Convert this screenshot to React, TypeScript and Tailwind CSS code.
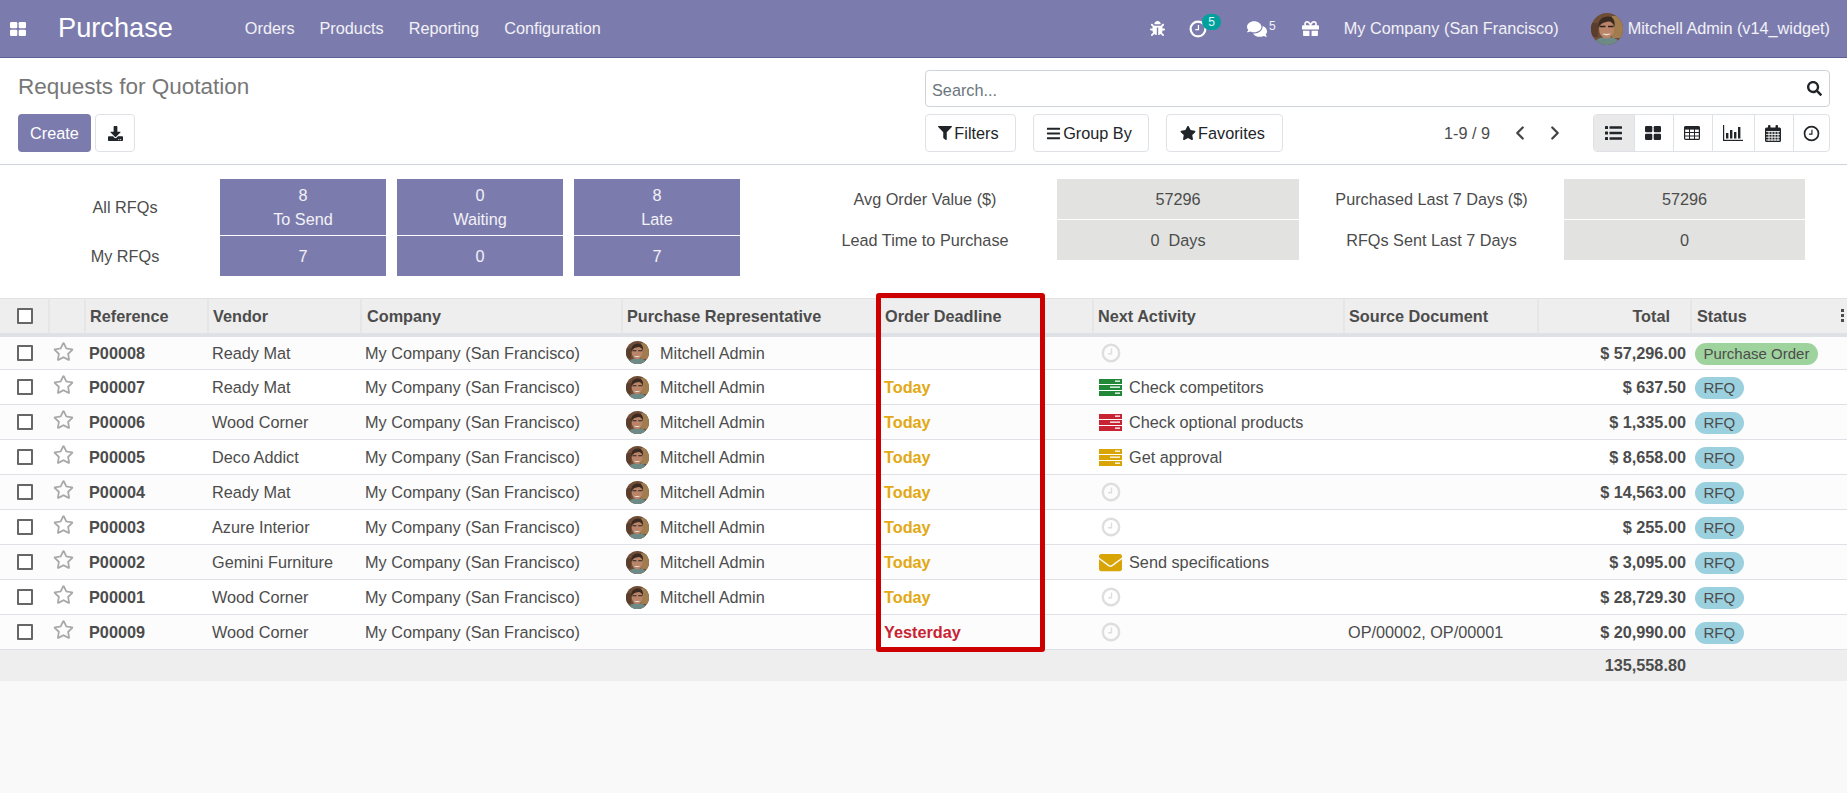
import { FaBars, FaBug, FaComments, FaDownload, FaEnvelope, FaFilter, FaGift, FaRegStar, FaSearch, FaStar } from "react-icons/fa";
import { LuChevronLeft, LuChevronRight } from "react-icons/lu";

const rows = [
  { ref: "P00008", vendor: "Ready Mat", deadline: "", activity: "", kind: "none", total: "$ 57,296.00", status: "Purchase Order" },
  { ref: "P00007", vendor: "Ready Mat", deadline: "Today", activity: "Check competitors", kind: "green", total: "$ 637.50", status: "RFQ" },
  { ref: "P00006", vendor: "Wood Corner", deadline: "Today", activity: "Check optional products", kind: "red", total: "$ 1,335.00", status: "RFQ" },
  { ref: "P00005", vendor: "Deco Addict", deadline: "Today", activity: "Get approval", kind: "yellow", total: "$ 8,658.00", status: "RFQ" },
  { ref: "P00004", vendor: "Ready Mat", deadline: "Today", activity: "", kind: "none", total: "$ 14,563.00", status: "RFQ" },
  { ref: "P00003", vendor: "Azure Interior", deadline: "Today", activity: "", kind: "none", total: "$ 255.00", status: "RFQ" },
  { ref: "P00002", vendor: "Gemini Furniture", deadline: "Today", activity: "Send specifications", kind: "mail", total: "$ 3,095.00", status: "RFQ" },
  { ref: "P00001", vendor: "Wood Corner", deadline: "Today", activity: "", kind: "none", total: "$ 28,729.30", status: "RFQ" },
  { ref: "P00009", vendor: "Wood Corner", deadline: "Yesterday", activity: "", kind: "none", total: "$ 20,990.00", status: "RFQ", source: "OP/00002, OP/00001", noRep: true },
];

function Avatar({ size }: { size: number }) {
  return (
    <svg width={size} height={size} viewBox="0 0 32 32" className="shrink-0 rounded-full">
      <rect width="32" height="32" fill="#6e4c36" />
      <rect x="21" y="3" width="11" height="22" fill="#a07c4e" />
      <rect x="0" y="10" width="7" height="14" fill="#5a3d2b" />
      <path d="M3 32c1-6 6-8 13-8s12 2 13 8z" fill="#6d8a86" />
      <ellipse cx="15.500" cy="16" rx="7.500" ry="9.500" fill="#b98468" />
      <path d="M7.500 15c-1-8 4-11.500 9.500-11.500 5 0 7.500 4 6.500 10.500-1-3.500-3-5.500-6-5.500-4 1-7.500 1-10 6.500z" fill="#3a2a22" />
      <path d="M9 13.500h5.500M17 13.500h5.500" stroke="#2b2220" strokeWidth="1.400" />
      <path d="M11 20.500c2 2.400 7 2.400 9 0-2 .5-7 .5-9 0z" fill="#eadfd4" />
    </svg>
  );
}

function ThLarge({ className }: { className: string }) {
  return (
    <svg viewBox="0 0 16 14" className={className} fill="currentColor">
      <rect x="0" y="0" width="7.300" height="6.300" rx="1.200" />
      <rect x="8.700" y="0" width="7.300" height="6.300" rx="1.200" />
      <rect x="0" y="7.700" width="7.300" height="6.300" rx="1.200" />
      <rect x="8.700" y="7.700" width="7.300" height="6.300" rx="1.200" />
    </svg>
  );
}

function ClockIcon({ className, thick = 2.400 }: { className: string; thick?: number }) {
  return (
    <svg viewBox="0 0 20 20" className={className} fill="none" stroke="currentColor">
      <circle cx="10" cy="10" r="8.200" strokeWidth={thick} />
      <path d="M10.500 5.500v5.300H7" strokeWidth="1.400" />
    </svg>
  );
}

function ListIcon() {
  return (
    <svg viewBox="0 0 17 14" className="h-[14px] w-[17px]" fill="#212529">
      {[0, 5.500, 11].map((y) => (
        <g key={y}>
          <rect x="0" y={y} width="3" height="3" rx=".6" />
          <rect x="4.500" y={y + 0.300} width="12.500" height="2.400" rx=".5" />
        </g>
      ))}
    </svg>
  );
}

function TableIcon() {
  return (
    <svg viewBox="0 0 16 14" className="h-[14px] w-[16px]">
      <rect x=".6" y=".6" width="14.800" height="12.800" rx="1" fill="none" stroke="#212529" strokeWidth="1.200" />
      <rect x=".6" y=".6" width="14.800" height="3" fill="#212529" />
      <path d="M.6 6.500h14.800M.6 10h14.800M5.500 3v10.500M10.500 3v10.500" stroke="#212529" strokeWidth="1" fill="none" />
    </svg>
  );
}

function BarChart() {
  return (
    <svg viewBox="0 0 20 16" className="h-[16px] w-[20px]" fill="#212529">
      <rect x="0" y="0" width="1.200" height="16" />
      <rect x="0" y="14.800" width="20" height="1.200" />
      <rect x="3" y="8" width="2.400" height="5.500" />
      <rect x="7" y="5" width="2.400" height="8.500" />
      <rect x="11" y="7" width="2.400" height="6.500" />
      <rect x="15" y="2" width="2.400" height="11.500" />
    </svg>
  );
}

function CalendarIcon() {
  return (
    <svg viewBox="0 0 16 17" className="h-[17px] w-[16px]" fill="#212529">
      <path d="M1.500 2.500h13A1.500 1.500 0 0 1 16 4v11.500a1.500 1.500 0 0 1-1.500 1.500h-13A1.500 1.500 0 0 1 0 15.500V4a1.500 1.500 0 0 1 1.500-1.500z" />
      <rect x="3" y="0" width="2.500" height="4.500" rx="1" />
      <rect x="10.500" y="0" width="2.500" height="4.500" rx="1" />
      <path d="M1.200 6.600h13.600M1.200 9.400h13.600M1.200 12.200h13.600M1.200 15h13.600M4 6v10M7 6v10M10 6v10M13 6v10" stroke="#fff" strokeWidth=".9" />
    </svg>
  );
}

function TasksIcon({ color }: { color: string }) {
  return (
    <svg viewBox="0 0 23 17" className="h-[17px] w-[23px] shrink-0">
      {[0, 6, 12].map((y, i) => (
        <g key={y}>
          <rect x="0" y={y} width="23" height="5" fill={color} />
          <rect x={i === 1 ? 11 : 16} y={y + 1.500} width={i === 1 ? 10 : 5} height="1.300" fill="#fff" />
        </g>
      ))}
    </svg>
  );
}

function ActivityIcon({ kind }: { kind: string }) {
  if (kind === "green") return <TasksIcon color="#218838" />;
  if (kind === "red") return <TasksIcon color="#c82333" />;
  if (kind === "yellow") return <TasksIcon color="#d9a406" />;
  if (kind === "mail") return <FaEnvelope className="h-[23px] w-[23px] shrink-0 text-[#d9a406]" />;
  return <ClockIcon className="ml-[2px] h-[20px] w-[20px] text-[#dedede]" />;
}

function Checkbox() {
  return <span className="block h-[16px] w-[16px] rounded-[1px] border-2 border-[#666] bg-white" />;
}

function ToolButton({ children, className }: { children: React.ReactNode; className: string }) {
  return (
    <button className={`flex h-[38px] items-center justify-center rounded-[4px] border border-[#dee2e6] bg-white text-[16.25px] text-[#212529] ${className}`}>
      {children}
    </button>
  );
}

export default function App() {
  const headCell = "border-r-2 border-[#e6e6e6] px-[4px] text-left font-bold";

  return (
    <div className="flex min-h-[793px] flex-col bg-[#f9f9f9] font-['Liberation_Sans',sans-serif] text-[16.25px] text-[#4c4c4c]">
      {/* Top bar */}
      <header className="flex h-[58px] items-center border-b border-[#5f5e97] bg-[#7c7bad] text-white/90">
        <ThLarge className="ml-[10px] h-[14px] w-[16px] text-white" />
        <span className="ml-[32px] text-[27.2px] text-white">Purchase</span>
        <nav className="ml-[72px] flex gap-[25px]">
          <span>Orders</span>
          <span>Products</span>
          <span>Reporting</span>
          <span>Configuration</span>
        </nav>
        <div className="ml-auto flex items-center pr-[17px]">
          <FaBug className="h-[15px] w-[15px] text-white" />
          <span className="relative ml-[24px]">
            <ClockIcon className="h-[18px] w-[18px] text-white" />
            <span className="absolute left-[13px] top-[-6px] flex h-[16px] w-[19px] items-center justify-center rounded-full bg-[#00a09d] text-[12px]">5</span>
          </span>
          <FaComments className="ml-[40px] h-[18px] w-[20px] text-white" />
          <span className="mb-[6px] ml-[2px] text-[12px]">5</span>
          <FaGift className="ml-[26px] h-[17px] w-[17px] text-white" />
          <span className="ml-[25px]">My Company (San Francisco)</span>
          <span className="ml-[32px]"><Avatar size={32} /></span>
          <span className="ml-[5px]">Mitchell Admin (v14_widget)</span>
        </div>
      </header>

      {/* Control panel */}
      <section className="flex h-[107px] border-b border-[#ced4da] bg-white pt-[12px]">
        <div className="w-[925px] pl-[18px]">
          <h1 className="h-[33px] text-[22.5px] font-normal leading-[33px] text-[#777]">Requests for Quotation</h1>
          <div className="mt-[11px] flex gap-[4px]">
            <button className="h-[38px] w-[73px] rounded-[4px] bg-[#7c7bad] text-white">Create</button>
            <ToolButton className="w-[40px]"><FaDownload className="h-[15px] w-[15px]" /></ToolButton>
          </div>
        </div>
        <div className="w-[905px]">
          <div className="flex h-[37px] items-center justify-between rounded-[4px] border border-[#ced4da] pl-[6px] pr-[7px] text-[#6c757d]">
            <span className="pt-[3px]">Search...</span>
            <FaSearch className="h-[15px] w-[15px] text-[#212529]" />
          </div>
          <div className="mt-[7px] flex items-center">
            <ToolButton className="w-[91px] gap-[2px] pr-[4px]"><FaFilter className="h-[14px] w-[14px]" />Filters</ToolButton>
            <ToolButton className="ml-[17px] w-[116px] gap-[2px] pr-[4px]"><FaBars className="h-[15px] w-[15px]" />Group By</ToolButton>
            <ToolButton className="ml-[17px] w-[117px] gap-[2px] pr-[4px]"><FaStar className="h-[16px] w-[16px]" />Favorites</ToolButton>
            <span className="ml-[161px] whitespace-nowrap text-[#4c4c4c]">1-9 / 9</span>
            <LuChevronLeft className="ml-[19px] h-[22px] w-[22px] text-[#444]" strokeWidth={2.500} />
            <LuChevronRight className="ml-[13px] h-[22px] w-[22px] text-[#444]" strokeWidth={2.500} />
            <div className="ml-[27px] flex h-[38px] w-[237px] overflow-hidden rounded-[4px] border border-[#dee2e6] text-[#212529]">
              <span className="flex w-[40px] items-center justify-center bg-[#e9e9e9] pr-[2px]"><ListIcon /></span>
              <span className="flex w-[39px] items-center justify-center border-l border-[#dee2e6] pr-[2px]"><ThLarge className="h-[14px] w-[16px]" /></span>
              <span className="flex w-[39px] items-center justify-center border-l border-[#dee2e6] pr-[2px]"><TableIcon /></span>
              <span className="flex w-[42px] items-center justify-center border-l border-[#dee2e6] pr-[2px]"><BarChart /></span>
              <span className="flex w-[39px] items-center justify-center border-l border-[#dee2e6] pr-[2px]"><CalendarIcon /></span>
              <span className="flex flex-1 items-center justify-center border-l border-[#dee2e6]"><ClockIcon className="h-[17px] w-[17px]" thick={2} /></span>
            </div>
          </div>
        </div>
      </section>

      {/* Dashboard */}
      <section className="flex h-[133px] bg-white pt-[14px]">
        <div className="grid h-[97px] grid-cols-[220px_166px_166px_166px] grid-rows-[56px_40px] gap-y-[1px]">
          <span className="flex items-center justify-center pl-[30px]">All RFQs</span>
          <div className="flex flex-col items-center justify-center bg-[#7c7bad] leading-[24px] text-white/90"><span>8</span><span>To Send</span></div>
          <div className="ml-[11px] flex w-[166px] flex-col items-center justify-center bg-[#7c7bad] leading-[24px] text-white/90"><span>0</span><span>Waiting</span></div>
          <div className="ml-[22px] flex w-[166px] flex-col items-center justify-center bg-[#7c7bad] leading-[24px] text-white/90"><span>8</span><span>Late</span></div>
          <span className="flex items-center justify-center pl-[30px]">My RFQs</span>
          <div className="flex items-center justify-center bg-[#7c7bad] text-white/90">7</div>
          <div className="ml-[11px] flex w-[166px] items-center justify-center bg-[#7c7bad] text-white/90">0</div>
          <div className="ml-[22px] flex w-[166px] items-center justify-center bg-[#7c7bad] text-white/90">7</div>
        </div>
        <div className="ml-[75px] grid h-[81px] grid-cols-[264px_242px_265px_241px] grid-rows-[40px_40px] gap-y-[1px]">
          <span className="flex items-center justify-center">Avg Order Value ($)</span>
          <div className="flex items-center justify-center bg-[#e2e2e0]">57296</div>
          <span className="flex items-center justify-center">Purchased Last 7 Days ($)</span>
          <div className="flex items-center justify-center bg-[#e2e2e0]">57296</div>
          <span className="flex items-center justify-center">Lead Time to Purchase</span>
          <div className="flex items-center justify-center whitespace-pre bg-[#e2e2e0]">0  Days</div>
          <span className="flex items-center justify-center">RFQs Sent Last 7 Days</span>
          <div className="flex items-center justify-center bg-[#e2e2e0]">0</div>
        </div>
      </section>

      {/* List */}
      <div className="relative">
        <table className="w-full table-fixed">
          <colgroup>
            <col className="w-[49px]" />
            <col className="w-[36px]" />
            <col className="w-[123px]" />
            <col className="w-[153px]" />
            <col className="w-[261px]" />
            <col className="w-[256px]" />
            <col className="w-[215px]" />
            <col className="w-[251px]" />
            <col className="w-[194px]" />
            <col className="w-[153px]" />
            <col />
          </colgroup>
          <thead>
            <tr className="h-[36px] border-b-4 border-t border-b-[#dee2e6] border-t-[#e2e2e2] bg-[#eeeeee]">
              <th className={headCell + " pl-[17px]"}><Checkbox /></th>
              <th className={headCell}></th>
              <th className={headCell}>Reference</th>
              <th className={headCell}>Vendor</th>
              <th className={headCell + " !px-[5px]"}>Company</th>
              <th className={headCell}>Purchase Representative</th>
              <th className={headCell + " !px-[6px]"}>Order Deadline</th>
              <th className={headCell}>Next Activity</th>
              <th className={headCell}>Source Document</th>
              <th className={headCell + " !pr-[20px] !text-right"}>Total</th>
              <th className="relative px-[5px] text-left font-bold">
                Status
                <span className="absolute right-[3px] top-[10px] flex flex-col gap-[2px]">
                  <span className="h-[3px] w-[3px] bg-[#4c4c4c]" />
                  <span className="h-[3px] w-[3px] bg-[#4c4c4c]" />
                  <span className="h-[3px] w-[3px] bg-[#4c4c4c]" />
                </span>
              </th>
            </tr>
          </thead>
          <tbody>
            {rows.map((r, i) => (
              <tr key={r.ref} className={`h-[35px] border-b border-[#dee2e6] ${i % 2 === 0 ? "bg-[#fcfcfc]" : "bg-white"}`}>
                <td className="pl-[17px]"><Checkbox /></td>
                <td className="pl-[4px] pt-[4px] align-top"><FaRegStar className="h-[21px] w-[21px] text-[#a8a8a8]" /></td>
                <td className="px-[4px] font-bold">{r.ref}</td>
                <td className="px-[4px]">{r.vendor}</td>
                <td className="px-[4px]">My Company (San Francisco)</td>
                <td className="px-[4px]">
                  {!r.noRep && (
                    <span className="flex items-center gap-[11px]"><Avatar size={23} />Mitchell Admin</span>
                  )}
                </td>
                <td className={`px-[6px] font-bold ${r.deadline === "Yesterday" ? "text-[#c82333]" : "text-[#e2a914]"}`}>{r.deadline}</td>
                <td className="px-[6px]">
                  <span className="flex items-center gap-[7px]"><ActivityIcon kind={r.kind} />{r.activity}</span>
                </td>
                <td className="px-[4px]">{r.source}</td>
                <td className="px-[5px] text-right font-bold">{r.total}</td>
                <td className="px-[4px]">
                  <span className={`inline-flex h-[22px] items-center rounded-full px-[8.5px] text-[15px] ${r.status === "RFQ" ? "bg-[#9bd0df]" : "bg-[#9fd39e]"}`}>{r.status}</span>
                </td>
              </tr>
            ))}
          </tbody>
          <tfoot>
            <tr className="h-[31px] bg-[#eeeeee]">
              <td colSpan={9} />
              <td className="px-[5px] text-right font-bold">135,558.80</td>
              <td />
            </tr>
          </tfoot>
        </table>
        {/* Red highlight */}
        <div className="pointer-events-none absolute left-[876px] top-[-5px] h-[359px] w-[169px] rounded-[3px] border-[5px] border-[#cc0000]" />
      </div>
    </div>
  );
}
